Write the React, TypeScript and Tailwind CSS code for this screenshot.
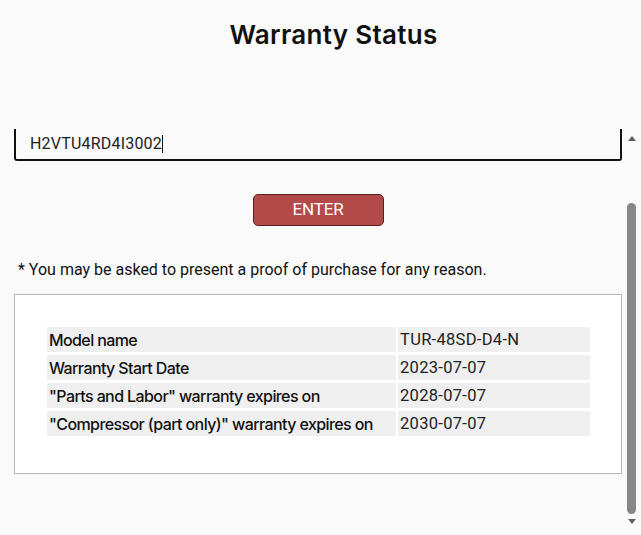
import React from 'react'

const rows = [
  { label: 'Model name', value: 'TUR-48SD-D4-N' },
  { label: 'Warranty Start Date', value: '2023-07-07' },
  { label: '"Parts and Labor" warranty expires on', value: '2028-07-07' },
  { label: '"Compressor (part only)" warranty expires on', value: '2030-07-07' },
]

function Scrollbar() {
  return (
    <div className="w-[19px] flex flex-col items-center">
      {/* up arrow */}
      <div className="mt-[7px] w-0 h-0 border-l-[4px] border-r-[4px] border-b-[5px] border-l-transparent border-r-transparent border-b-[#606060]" />
      <div className="mt-[62px] w-[9px] h-[311px] rounded-full bg-[#878787]" />
      {/* down arrow */}
      <div className="mt-[5px] w-0 h-0 border-l-[4px] border-r-[4px] border-t-[5px] border-l-transparent border-r-transparent border-t-[#606060]" />
    </div>
  )
}

export default function App() {
  return (
    <div className="w-[641px] h-[535px] bg-[#fafafa] overflow-hidden flex flex-col">
      <header className="h-[129px] flex justify-center pt-[18px] pl-[26px]">
        <h1 className="text-[26px] leading-[34px] font-semibold text-[#111] font-['Inter',sans-serif] tracking-[0.3px]">
          Warranty Status
        </h1>
      </header>

      <div className="flex-1 flex min-h-0">
        <div className="w-[622px] pl-[14px] flex flex-col overflow-hidden">
          {/* serial number input (scrolled partly out of view) */}
          <div className="h-[32px] border-x-2 border-b-2 border-[#111] rounded-b-[3px] bg-[#fafafa] flex items-center pl-[14px]">
            <span className="text-[16px] text-[#222] font-['Roboto',sans-serif] tracking-[0.2px]">
              H2VTU4RD4I3002
            </span>
            <span className="w-px h-[18px] bg-[#111]" />
          </div>

          <div className="flex justify-center mt-[33px]">
            <button className="w-[131px] h-[32px] rounded-[5px] bg-[#b34a4a] border border-[#5a2020] text-white text-[17px] font-['Roboto',sans-serif] tracking-[-0.2px]">
              ENTER
            </button>
          </div>

          <p className="mt-[34px] ml-[4px] text-[16px] leading-[20px] text-[#111] font-['Roboto',sans-serif]">
            * You may be asked to present a proof of purchase for any reason.
          </p>

          <div className="mt-[14px] h-[180px] border border-[#b8b8b8] bg-white px-[32px] pt-[32px]">
            <div className="grid grid-cols-[349px_192px] gap-x-[2px] gap-y-[3px]">
              {rows.map((r) => (
                <React.Fragment key={r.label}>
                  <div className="h-[25px] bg-[#efefef] flex items-center pl-[2px] text-[16px] font-medium text-[#111] font-['Inter',sans-serif] tracking-[-0.6px]">
                    {r.label}
                  </div>
                  <div className="h-[25px] bg-[#efefef] flex items-center pl-[2px] pt-[2px] text-[16.5px] text-[#222] font-['Roboto',sans-serif] tracking-[0.3px]">
                    {r.value}
                  </div>
                </React.Fragment>
              ))}
            </div>
          </div>
        </div>
        <Scrollbar />
      </div>
    </div>
  )
}
